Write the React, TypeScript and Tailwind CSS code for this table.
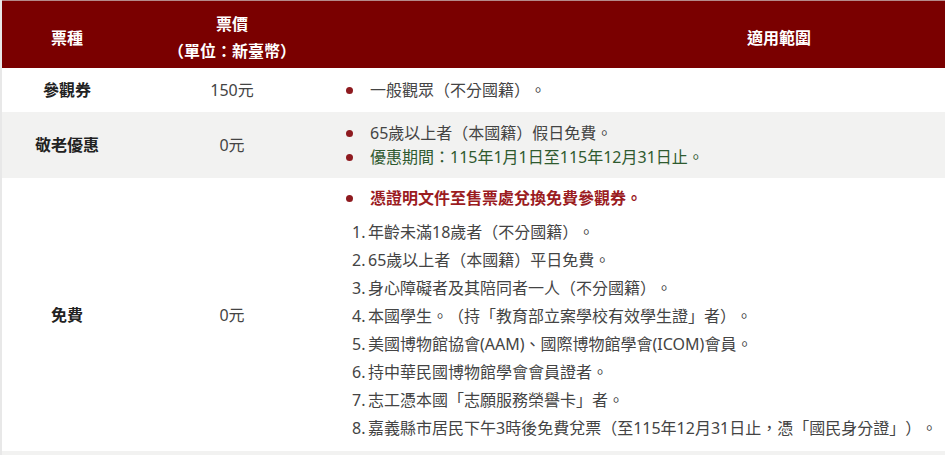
import React from "react";

const font = { fontFamily: '"Noto Sans", "Noto Sans CJK TC", sans-serif' };

function Bullet({ children, className = "" }: { children: React.ReactNode; className?: string }) {
  return (
    <div className={`flex items-center ${className}`}>
      <span className="w-[7px] h-[7px] rounded-full bg-[#8e1a1f] ml-[11px] mr-[17px] shrink-0" />
      <span>{children}</span>
    </div>
  );
}

export default function App() {
  const items = [
    "年齡未滿18歲者（不分國籍）。",
    "65歲以上者（本國籍）平日免費。",
    "身心障礙者及其陪同者一人（不分國籍）。",
    "本國學生。（持「教育部立案學校有效學生證」者）。",
    "美國博物館協會(AAM)、國際博物館學會(ICOM)會員。",
    "持中華民國博物館學會會員證者。",
    "志工憑本國「志願服務榮譽卡」者。",
    "嘉義縣市居民下午3時後免費兌票（至115年12月31日止，憑「國民身分證」）。",
  ];
  return (
    <div
      className="w-[945px] h-[455px] overflow-hidden bg-white text-[16px] text-[#444] [text-spacing-trim:space-all]"
      style={font}
    >
      <div className="w-[1226px] border-l-2 border-[#e8e8e8]">
        {/* header */}
        <div className="grid grid-cols-[130px_200px_1fr] h-[68px] pt-[7px] bg-[#7a0000] border-t border-[#b58a8a] text-white font-bold">
          <div className="flex items-center justify-center">票種</div>
          <div className="flex flex-col items-center justify-center leading-[27px]">
            <div>票價</div>
            <div>（單位：新臺幣）</div>
          </div>
          <div className="flex items-center justify-center">適用範圍</div>
        </div>
        {/* row 1 */}
        <div className="grid grid-cols-[130px_200px_1fr] h-[44px] bg-white">
          <div className="flex items-center justify-center font-bold text-[#222]">參觀券</div>
          <div className="flex items-center justify-center">150元</div>
          <div className="flex items-center pl-[3px]">
            <Bullet>一般觀眾（不分國籍）。</Bullet>
          </div>
        </div>
        {/* row 2 */}
        <div className="grid grid-cols-[130px_200px_1fr] h-[66px] bg-[#f2f2f1]">
          <div className="flex items-center justify-center font-bold text-[#222]">敬老優惠</div>
          <div className="flex items-center justify-center">0元</div>
          <div className="flex flex-col justify-center pl-[3px] leading-[24px]">
            <Bullet>65歲以上者（本國籍）假日免費。</Bullet>
            <Bullet className="text-[#2f5a2f]">優惠期間：115年1月1日至115年12月31日止。</Bullet>
          </div>
        </div>
        {/* row 3 */}
        <div className="grid grid-cols-[130px_200px_1fr] h-[273px] bg-white">
          <div className="flex items-center justify-center font-bold text-[#222]">免費</div>
          <div className="flex items-center justify-center">0元</div>
          <div className="flex flex-col pt-[8px] pl-[3px]">
            <Bullet className="leading-[24px] font-bold text-[#9b1c1f]">憑證明文件至售票處兌換免費參觀券。</Bullet>
            <ol className="mt-[8px] pl-[17px] leading-[28px]">
              {items.map((t, i) => (
                <li key={i} className="flex">
                  <span className="w-[16px]">{i + 1}.</span>
                  <span>{t}</span>
                </li>
              ))}
            </ol>
          </div>
        </div>
        <div className="h-[10px] bg-[#f2f2f1]" />
      </div>
    </div>
  );
}
